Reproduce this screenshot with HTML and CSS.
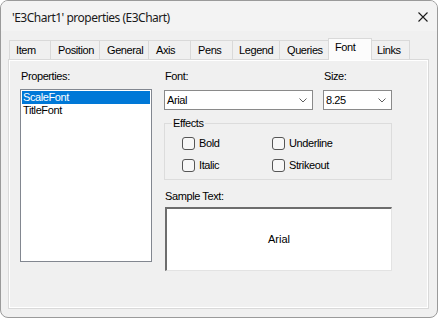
FILE: index.html
```html
<!DOCTYPE html>
<html>
<head>
<meta charset="utf-8">
<link rel="stylesheet" href="styles.css">
</head>
<body>
<div class="window">
  <div class="titlebar">
    <span class="title">'E3Chart1' properties (E3Chart)</span>
    <svg class="close" width="10" height="10" viewBox="0 0 10 10"><path d="M0.5 0.5 L9.5 9.5 M9.5 0.5 L0.5 9.5" stroke="#1b1b1b" stroke-width="1.1" fill="none"/></svg>
  </div>
  <div class="body">
    <div class="tabs">
      <div class="tab t-item">Item</div>
      <div class="tab t-position">Position</div>
      <div class="tab t-general">General</div>
      <div class="tab t-axis">Axis</div>
      <div class="tab t-pens">Pens</div>
      <div class="tab t-legend">Legend</div>
      <div class="tab t-queries">Queries</div>
      <div class="tab t-font selected">Font</div>
      <div class="tab t-links last">Links</div>
    </div>
    <div class="panel">
      <div class="col-left">
        <div class="label">Properties:</div>
        <div class="listbox">
          <div class="li sel">ScaleFont</div>
          <div class="li">TitleFont</div>
        </div>
      </div>
      <div class="col-right">
        <div class="row-top">
          <div class="field f-font">
            <div class="label">Font:</div>
            <div class="combo"><span class="val">Arial</span><svg class="chev" width="8" height="5" viewBox="0 0 8 5"><path d="M0.5 0.5 L4 4 L7.5 0.5" stroke="#5f5f5f" fill="none" stroke-width="1"/></svg></div>
          </div>
          <div class="field f-size">
            <div class="label">Size:</div>
            <div class="combo"><span class="val">8.25</span><svg class="chev" width="8" height="5" viewBox="0 0 8 5"><path d="M0.5 0.5 L4 4 L7.5 0.5" stroke="#5f5f5f" fill="none" stroke-width="1"/></svg></div>
          </div>
        </div>
        <fieldset class="group">
          <legend>Effects</legend>
          <div class="checks">
            <div class="chk"><span class="box"></span><span>Bold</span></div>
            <div class="chk"><span class="box"></span><span>Underline</span></div>
            <div class="chk"><span class="box"></span><span>Italic</span></div>
            <div class="chk"><span class="box"></span><span>Strikeout</span></div>
          </div>
        </fieldset>
        <div class="label sample-label">Sample Text:</div>
        <div class="sample">Arial</div>
      </div>
    </div>
  </div>
</div>
</body>
</html>
```

FILE: styles.css
```css
html, body {
  margin: 0;
  padding: 0;
  background: #ffffff;
}
.window {
  width: 438px;
  height: 318px;
  box-sizing: border-box;
  border: 1px solid #9a9a9a;
  border-radius: 8px;
  overflow: hidden;
  background: #f0f0f0;
  font-family: "Liberation Sans", Arial, sans-serif;
  font-size: 11px;
  line-height: 13px;
  letter-spacing: -0.4px;
  color: #000;
}
.titlebar {
  height: 30px;
  background: #f3f3f3;
  display: flex;
  align-items: center;
  justify-content: space-between;
  padding: 0 9px 0 11px;
}
.title {
  font-family: "Noto Sans", "Open Sans", sans-serif;
  font-size: 12px;
  letter-spacing: -0.5px;
  color: #1a1a1a;
  padding-top: 2px;
}
.close {
  display: block;
  margin-top: 1px;
}
.body {
  padding: 7px 8px 0 7px;
}
.tabs {
  display: flex;
  align-items: flex-end;
  height: 21px;
  padding-left: 1px;
}
.tab {
  box-sizing: border-box;
  height: 19px;
  border-top: 1px solid #d9d9d9;
  border-left: 1px solid #d9d9d9;
  padding: 3px 0 0 6px;
  background: #f0f0f0;
  white-space: nowrap;
}
.tab.last {
  border-right: 1px solid #d9d9d9;
}
.tab.selected {
  height: 22px;
  margin-bottom: -1px;
  background: #fcfcfc;
  border-right: 1px solid #d9d9d9;
  padding-top: 2px;
  position: relative;
  z-index: 1;
}
.t-item { width: 41px; }
.t-position { width: 49px; padding-left: 7px; }
.t-general { width: 49px; padding-left: 7px; }
.t-axis { width: 42px; padding-left: 7px; }
.t-pens { width: 42px; padding-left: 7px; }
.t-legend { width: 47px; }
.t-queries { width: 49px; padding-left: 7px; }
.t-font { width: 44px; }
.t-links { width: 38px; border-left: none; padding-left: 5px; }
.panel {
  box-sizing: border-box;
  height: 250px;
  border: 1px solid #d9d9d9;
  box-shadow: inset 1px 1px 0 #ffffff, inset -1px -1px 0 #ffffff;
  background: #f0f0f0;
  padding: 10px 0 0 11px;
  display: flex;
  gap: 12px;
}
.label {
  height: 13px;
  padding-left: 1px;
}
.col-left {
  width: 132px;
}
.listbox {
  box-sizing: border-box;
  margin-top: 6px;
  height: 173px;
  border: 1px solid #828790;
  background: #fff;
  padding: 1px;
}
.li {
  height: 13px;
  padding-left: 1px;
}
.li.sel {
  background: #0078d7;
  color: #fff;
}
.col-right {
  width: 228px;
}
.row-top {
  display: flex;
  gap: 10px;
}
.f-font { width: 149px; }
.f-size { width: 69px; }
.combo {
  box-sizing: border-box;
  margin-top: 7px;
  height: 20px;
  border: 1px solid #8a8a8a;
  background: #fff;
  display: flex;
  align-items: center;
  justify-content: space-between;
  padding: 0 5px 0 2px;
}
.val {
  padding-top: 1px;
}
.chev {
  display: block;
}
.group {
  margin: 7px 0 0 0;
  padding: 0;
  border: 1px solid #dcdcdc;
  min-width: 0;
}
.group legend {
  padding: 0 1px;
  margin-left: 7px;
  line-height: 13px;
}
.checks {
  display: grid;
  grid-template-columns: 90px 1fr;
  row-gap: 9px;
  padding: 7px 0 7px 17px;
}
.chk {
  display: flex;
  align-items: center;
  height: 13px;
  gap: 4px;
}
.box {
  box-sizing: border-box;
  width: 13px;
  height: 13px;
  border: 1px solid #555;
  border-radius: 3px;
  background: #f7f7f7;
}
.sample-label {
  margin-top: 10px;
}
.sample {
  box-sizing: border-box;
  margin-top: 4px;
  margin-left: 1px;
  width: 227px;
  height: 64px;
  background: #fff;
  border-top: 2px solid #6d6d6d;
  border-left: 2px solid #6d6d6d;
  border-right: 1px solid #e3e3e3;
  border-bottom: 1px solid #e3e3e3;
  display: flex;
  align-items: center;
  justify-content: center;
  letter-spacing: 0;
}
```
